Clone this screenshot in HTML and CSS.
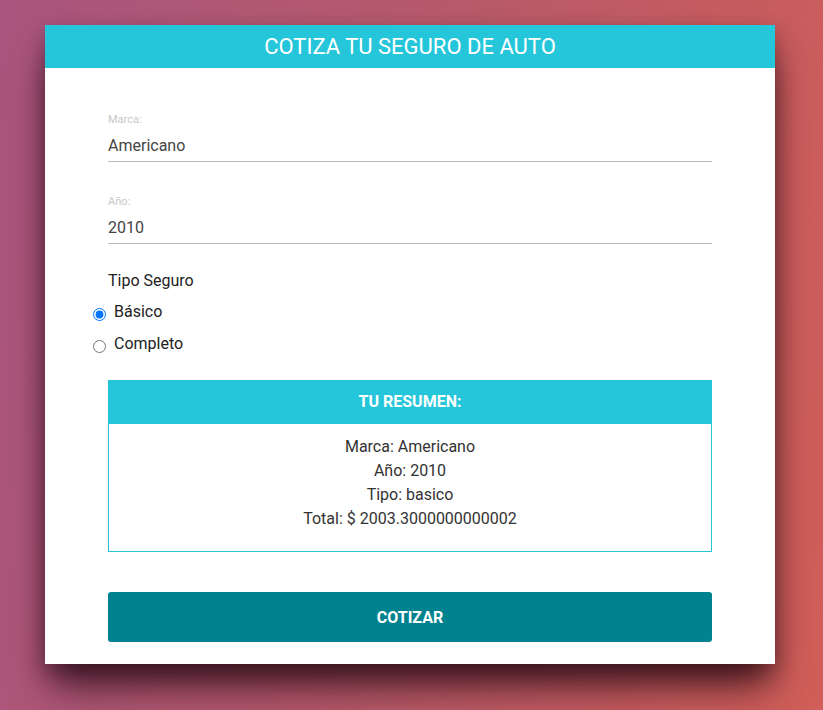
FILE: index.html
```html
<!DOCTYPE html>
<html lang="es">
<head>
<meta charset="utf-8">
<title>Cotiza tu seguro</title>
<link rel="stylesheet" href="styles.css">
</head>
<body>
<div class="card">
  <header class="card-header">COTIZA TU SEGURO DE AUTO</header>
  <form class="form">
    <div class="field">
      <label class="field-label">Marca:</label>
      <div class="field-value">Americano</div>
    </div>
    <div class="field">
      <label class="field-label">Año:</label>
      <div class="field-value">2010</div>
    </div>
    <div class="radio-group">
      <div class="radio-title">Tipo Seguro</div>
      <label class="radio-row"><input type="radio" name="plan" checked> Básico</label>
      <label class="radio-row"><input type="radio" name="plan"> Completo</label>
    </div>
    <div class="summary">
      <div class="summary-head">TU RESUMEN:</div>
      <div class="summary-body">
        <p>Marca: Americano</p>
        <p>Año: 2010</p>
        <p>Tipo: basico</p>
        <p>Total: $ 2003.3000000000002</p>
      </div>
    </div>
    <button type="button" class="btn">COTIZAR</button>
  </form>
</div>
</body>
</html>
```

FILE: styles.css
```css
html, body {
  margin: 0;
  height: 100%;
}
body {
  background: linear-gradient(100deg, #a9557f 0%, #b85a6a 50%, #d15e58 100%);
  font-family: Roboto, "Liberation Sans", sans-serif;
  padding-top: 25px;
  box-sizing: border-box;
}
.card {
  width: 730px;
  margin-left: 45px;
  background: #fff;
  box-shadow: 0 26px 36px -6px rgba(30, 5, 15, 0.8), 0 8px 18px rgba(30, 5, 15, 0.3);
}
.card-header {
  background: #26c6da;
  color: #fff;
  height: 43px;
  line-height: 44px;
  text-align: center;
  font-size: 22px;
}
.form {
  padding: 44px 63px 22px;
}
.field {
  margin-bottom: 32px;
}
.field + .field {
  margin-bottom: 26px;
}
.field-label {
  display: block;
  font-size: 11px;
  color: #c8c8c8;
  line-height: 16px;
}
.field-value {
  font-size: 16px;
  color: #444;
  line-height: 24px;
  padding: 6px 0 3px;
  border-bottom: 1px solid #bbb;
}
.radio-group {
  margin-bottom: 24px;
  margin-top: -1px;
}
.radio-title {
  font-size: 16px;
  color: #222;
  line-height: 24px;
  margin-bottom: 7px;
}
.radio-row {
  display: flex;
  align-items: center;
  font-size: 16px;
  color: #222;
  line-height: 24px;
  margin-left: -15px;
  margin-bottom: 8px;
  gap: 4px;
}
.radio-row input {
  margin: 4px 4px 0 0;
  width: 13px;
  height: 13px;
}
.summary {
  margin-bottom: 40px;
}
.summary-head {
  background: #26c6da;
  color: #fff;
  font-weight: 700;
  font-size: 16px;
  height: 44px;
  line-height: 44px;
  text-align: center;
}
.summary-body {
  border: 1px solid #26c6da;
  border-top: none;
  text-align: center;
  padding: 11px 0 20px;
}
.summary-body p {
  margin: 0;
  font-size: 16px;
  line-height: 24px;
  color: #333;
}
.btn {
  display: block;
  width: 100%;
  height: 50px;
  border: none;
  border-radius: 3px;
  background: #00838f;
  color: #fff;
  font-family: inherit;
  font-weight: 700;
  font-size: 16px;
}
```
